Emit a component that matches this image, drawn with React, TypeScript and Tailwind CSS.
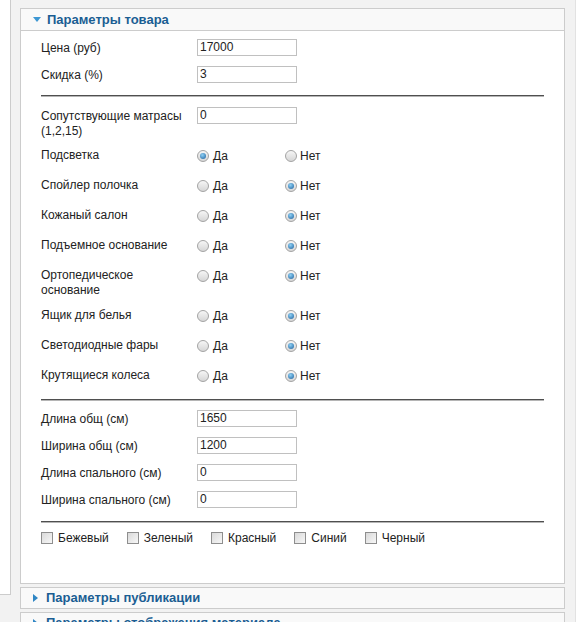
import React from 'react';

const font = { fontFamily: '"Liberation Sans", Arial, sans-serif' };

function Radio({ checked }: { checked?: boolean }) {
  return (
    <span className="relative inline-block w-[12px] h-[12px] shrink-0 rounded-full border border-[#a3a3a3] bg-linear-to-b from-[#f6f6f6] to-[#d6d6d6]">
      {checked && (
        <span className="absolute left-[2px] top-[2px] w-[6px] h-[6px] rounded-full bg-[radial-gradient(circle_at_40%_35%,#8fd0f5,#1a5f9c)]" />
      )}
    </span>
  );
}

function Checkbox() {
  return (
    <span className="inline-block w-[12px] h-[12px] shrink-0 border border-[#8e8e8e] bg-linear-to-br from-[#d9d9d9] to-[#f7f7f7]" />
  );
}

function TextInput({ value }: { value: string }) {
  return (
    <div className="w-[100px] h-[17px] border border-[#c0c0c0] bg-white pl-[2px] text-[12px] leading-[15px] text-[#222]">
      {value}
    </div>
  );
}

function Divider({ className }: { className: string }) {
  return <div className={`h-[2px] border-t border-[#4f4f4f] border-b border-b-[#b5b5b5] ${className}`} />;
}

function InputRow({ label, value }: { label: string; value: string }) {
  return (
    <div className="flex items-center h-[27px]">
      <div className="w-[156px] shrink-0">{label}</div>
      <TextInput value={value} />
    </div>
  );
}

function RadioRow({ label, yes, tall }: { label: React.ReactNode; yes?: boolean; tall?: boolean }) {
  return (
    <div className={`flex items-start pt-[9px] ${tall ? 'h-[40px]' : 'h-[30px]'}`}>
      <div className="w-[156px] shrink-0 leading-[15px]">{label}</div>
      <div className="flex items-center h-[15px] w-[88px]">
        <Radio checked={yes} />
        <span className="ml-[4px]">Да</span>
      </div>
      <div className="flex items-center h-[15px]">
        <Radio checked={!yes} />
        <span className="ml-[3px]">Нет</span>
      </div>
    </div>
  );
}

const radios: { label: React.ReactNode; yes?: boolean; tall?: boolean }[] = [
  { label: 'Подсветка', yes: true },
  { label: 'Спойлер полочка' },
  { label: 'Кожаный салон' },
  { label: 'Подъемное основание' },
  { label: <>Ортопедическое<br />основание</>, tall: true },
  { label: 'Ящик для белья' },
  { label: 'Светодиодные фары' },
  { label: 'Крутящиеся колеса' },
];

const colors = ['Бежевый', 'Зеленый', 'Красный', 'Синий', 'Черный'];

function ArrowDown() {
  return (
    <svg width="8" height="5" viewBox="0 0 8 5" className="shrink-0">
      <path d="M0 0 H8 L4 5 Z" fill="#3d97d3" />
    </svg>
  );
}

function ArrowRight() {
  return (
    <svg width="5" height="8" viewBox="0 0 5 8" className="shrink-0">
      <path d="M0 0 L5 4 L0 8 Z" fill="#2f86c4" />
    </svg>
  );
}

export default function App() {
  return (
    <div className="w-[576px] h-[622px] bg-[#f2f2f2] overflow-hidden flex text-[12px] text-[#222]" style={font}>
      {/* left column stub */}
      <div className="w-[11px] h-[595px] shrink-0 bg-white border-r border-b border-[#cccccc]" />

      <div className="ml-[9px] w-[545px] shrink-0 pt-[8px] flex flex-col gap-[3px]">
        <div className="h-[576px] shrink-0 border border-[#cccccc] bg-white flex flex-col">
          <div className="h-[22px] shrink-0 bg-[#f9f9f9] border-b border-[#cccccc] flex items-center pl-[12px] gap-[6px]">
            <ArrowDown />
            <span className="text-[13px] font-bold text-[#1b5e93]">Параметры товара</span>
          </div>

          <div className="pl-[20px] pr-[20px] pt-[3px]">
            <InputRow label="Цена (руб)" value="17000" />
            <InputRow label="Скидка (%)" value="3" />
            <Divider className="mt-[7px]" />

            <div className="flex items-start mt-[10px]">
              <div className="w-[156px] shrink-0 leading-[15px] pt-[2px]">
                Сопутствующие матрасы<br />(1,2,15)
              </div>
              <TextInput value="0" />
            </div>

            {radios.map((r, i) => (
              <RadioRow key={i} label={r.label} yes={r.yes} tall={r.tall} />
            ))}

            <Divider className="mt-[10px]" />
            <div className="mt-[4px]">
              <InputRow label="Длина общ (см)" value="1650" />
              <InputRow label="Ширина общ (см)" value="1200" />
              <InputRow label="Длина спального (см)" value="0" />
              <InputRow label="Ширина спального (см)" value="0" />
            </div>
            <Divider className="mt-[8px]" />

            <div className="flex items-center h-[16px] mt-[7px]">
              {colors.map((c) => (
                <div key={c} className="flex items-center mr-[18px]">
                  <Checkbox />
                  <span className="ml-[5px]">{c}</span>
                </div>
              ))}
            </div>
          </div>
        </div>

        <div className="h-[22px] shrink-0 border border-[#cccccc] bg-[#f9f9f9] flex items-center pl-[12px] gap-[8px]">
          <ArrowRight />
          <span className="text-[13px] font-bold text-[#1b5e93]">Параметры публикации</span>
        </div>

        <div className="h-[22px] shrink-0 border border-[#cccccc] bg-[#f9f9f9] flex items-center pl-[12px] gap-[8px]">
          <ArrowRight />
          <span className="text-[13px] font-bold text-[#1b5e93]">Параметры отображения материала</span>
        </div>
      </div>

      <div className="ml-[10px] w-px h-full bg-[#e2e2e2]" />
    </div>
  );
}
